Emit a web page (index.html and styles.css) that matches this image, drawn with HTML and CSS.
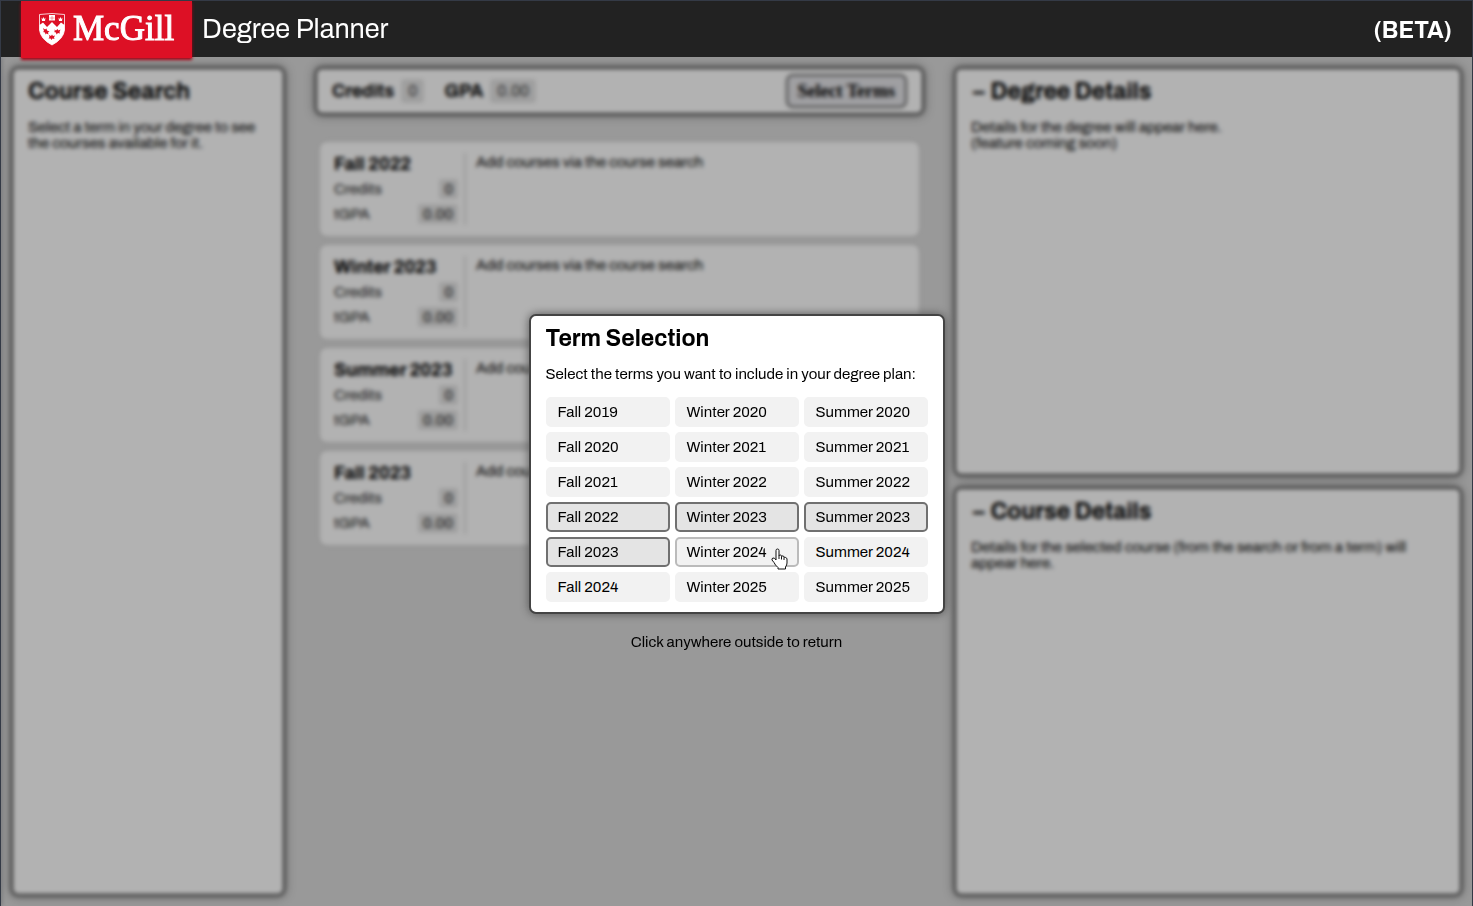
FILE: index.html
```html
<!DOCTYPE html>
<html lang="en">
<head>
<meta charset="utf-8">
<title>McGill Degree Planner</title>
<link rel="stylesheet" href="styles.css">
</head>
<body>
<header class="topbar">
  <a class="logo" href="#">
    <svg class="crest" viewBox="0 0 27 33" aria-hidden="true">
      <path d="M1 1.500Q13.500-.5 26 1.500V17Q25 26 13.500 32Q2 26 1 17Z" fill="#dd1025" stroke="#fff" stroke-width=".8"/>
      <path d="M1 12L4.500 9.500L8.500 14L13.500 9L18.500 14L22.500 9.500L26 12V17Q25 26 13.500 32Q2 26 1 17Z" fill="#fff"/>
      <path d="M10.500 2h6v5.500h-6z" fill="#fff"/>
      <path d="M11 5h5M13.500 3v4" stroke="#dd1025" stroke-width=".4"/>
      <path d="M3 4.500l1 1.500 1-2 1 2 1-1.500-.5 3.500h-3zM20 4.500l1 1.500 1-2 1 2 1-1.500-.5 3.500h-3z" fill="#fff"/>
      <path d="M4.500 15l2 1.500 1.500-1 .5 2 2.500 1-1.500 1 .5 2-2-1-1 1-.5-2-2-.5 1-1zM15.500 16.500l2 1 1.500-1.500 1 1.500 2-1-1 2.500.5 1.500-2-.5-1.500 1.500-.5-2-2-.5 1-1zM10.500 22l2 1 1-1.500 1 1.500 2-.5-1 2 .5 1.500-2-.5-1 1.500-1-1.500-2 0 1-1.500z" fill="#dd1025"/>
    </svg>
    <span class="wordmark">McGill</span>
  </a>
  <h1 class="app-title">Degree Planner</h1>
  <strong class="beta">(BETA)</strong>
</header>

<div class="stage">
  <main class="planner">
    <section class="panel">
      <h2>Course Search</h2>
      <p>Select a term in your degree to see the courses available for it.</p>
    </section>

    <section class="plan">
      <div class="panel summary">
        <span class="summary-label">Credits</span><span class="chip">0</span>
        <span class="summary-label gpa">GPA</span><span class="chip">0.00</span>
        <button class="select-terms" type="button">Select Terms</button>
      </div>
      <div class="terms">
        <article class="term">
          <div class="term-info"><h3>Fall 2022</h3>
            <div class="stat"><span>Credits</span><span class="value">0</span></div>
            <div class="stat"><span>tGPA</span><span class="value">0.00</span></div></div>
          <p class="term-courses">Add courses via the course search</p>
        </article>
        <article class="term">
          <div class="term-info"><h3>Winter 2023</h3>
            <div class="stat"><span>Credits</span><span class="value">0</span></div>
            <div class="stat"><span>tGPA</span><span class="value">0.00</span></div></div>
          <p class="term-courses">Add courses via the course search</p>
        </article>
        <article class="term">
          <div class="term-info"><h3>Summer 2023</h3>
            <div class="stat"><span>Credits</span><span class="value">0</span></div>
            <div class="stat"><span>tGPA</span><span class="value">0.00</span></div></div>
          <p class="term-courses">Add courses via the course search</p>
        </article>
        <article class="term">
          <div class="term-info"><h3>Fall 2023</h3>
            <div class="stat"><span>Credits</span><span class="value">0</span></div>
            <div class="stat"><span>tGPA</span><span class="value">0.00</span></div></div>
          <p class="term-courses">Add courses via the course search</p>
        </article>
      </div>
    </section>

    <div class="details">
      <section class="panel">
        <h2><span class="collapse">–</span>Degree Details</h2>
        <p>Details for the degree will appear here.<br>(feature coming soon)</p>
      </section>
      <section class="panel">
        <h2><span class="collapse">–</span>Course Details</h2>
        <p>Details for the selected course (from the search or from a term) will appear here.</p>
      </section>
    </div>
  </main>

  <div class="overlay">
    <div class="dialog" role="dialog" aria-labelledby="dialog-title">
      <h2 id="dialog-title">Term Selection</h2>
      <p>Select the terms you want to include in your degree plan:</p>
      <div class="term-grid">
        <button type="button">Fall 2019</button><button type="button">Winter 2020</button><button type="button">Summer 2020</button>
        <button type="button">Fall 2020</button><button type="button">Winter 2021</button><button type="button">Summer 2021</button>
        <button type="button">Fall 2021</button><button type="button">Winter 2022</button><button type="button">Summer 2022</button>
        <button type="button" aria-pressed="true">Fall 2022</button><button type="button" aria-pressed="true">Winter 2023</button><button type="button" aria-pressed="true">Summer 2023</button>
        <button type="button" aria-pressed="true">Fall 2023</button>
        <button type="button" class="hovered">Winter 2024<svg class="pointer" viewBox="0 0 17 22" aria-hidden="true"><path d="M5 12V2.500Q5 1 6.500 1T8 2.500V8Q8 7 9.300 7T10.500 8.500Q10.700 7.700 12 8T13 9.500Q13.500 9 14.700 9.500T16 11V15Q16 17 14.500 19V21H7V19.500Q4 17 3 14.500L1 12Q.5 10.500 2 10T5 12ZM8 8V11M10.500 8.500V11.500M13 9.500V12" fill="#fff" stroke="#111" stroke-linejoin="round"/></svg></button>
        <button type="button">Summer 2024</button>
        <button type="button">Fall 2024</button><button type="button">Winter 2025</button><button type="button">Summer 2025</button>
      </div>
    </div>
    <p class="hint">Click anywhere outside to return</p>
  </div>
</div>
</body>
</html>
```
FILE: styles.css
```css
* { box-sizing: border-box; }
h1, h2, h3, p { margin: 0; }

body {
  margin: 0;
  min-height: 100vh;
  display: flex;
  flex-direction: column;
  border: 1px solid #343a46;
  border-bottom: 0;
  background: #dbdbdb;
  color: #000;
  font: 15px/16px Archivo, "Liberation Sans", Arial, sans-serif;
}
button { font: inherit; color: inherit; cursor: pointer; }

.topbar {
  position: relative;
  z-index: 2;
  display: flex;
  align-items: center;
  height: 56px;
  padding: 0 20px;
  background: #222;
  color: #fff;
}
.logo {
  align-self: flex-start;
  display: flex;
  align-items: center;
  gap: 7px;
  height: 57px;
  padding: 0 18px 0 17px;
  background: #dd1025;
  box-shadow: 0 2px 3px #a00014;
  color: #fff;
  text-decoration: none;
}
.crest { width: 28px; height: 33px; }
.wordmark { padding-bottom: 3px; font: 35px/53px "Liberation Serif", serif; -webkit-text-stroke: 1px #fff; }
.app-title { margin-left: 10px; font-size: 27px; font-weight: 400; line-height: 32px; }
.beta { margin-left: auto; padding-top: 3px; font-size: 23px; line-height: 28px; }

.stage { position: relative; flex: 1; display: flex; }
.planner {
  flex: 1;
  display: grid;
  grid-template-columns: 274fr 609fr 508fr;
  gap: 30px;
  padding: 10px;
}
.panel {
  padding: 9px 15px;
  border: 2px solid #444;
  border-radius: 7px;
  background: #fff;
  box-shadow: 0 0 10px #777;
}
h2 { font-size: 23px; line-height: 28px; }
.panel p { margin-top: 13px; }
.collapse { margin: 0 6px 0 2px; }
.details { display: grid; grid-template-rows: 1fr 1fr; gap: 11px; }

.plan { display: flex; flex-direction: column; gap: 27px; }
.summary { display: flex; align-items: center; height: 48px; padding: 0 15px; }
.summary-label { font-size: 18px; font-weight: bold; }
.gpa { margin-left: 20px; }
.chip {
  margin-left: 7px;
  padding: 4px 7px;
  border-radius: 4px;
  background: #e4e4e4;
  color: #444;
  font-size: 16px;
}
.select-terms {
  margin-left: auto;
  padding: 6px 10px;
  border: 2px solid #666;
  border-radius: 7px;
  background: #e4e4e8;
  font: bold 18px/18px "Liberation Serif", serif;
}

.terms { display: flex; flex-direction: column; gap: 9px; padding: 0 5px; }
.term {
  display: flex;
  height: 94px;
  padding: 11px 14px;
  border-radius: 7px;
  background: #fff;
  box-shadow: 0 0 4px #ccc;
}
.term-info { width: 132px; padding-right: 6px; border-right: 2px solid #ddd; }
.term-info h3 { margin-bottom: 4px; font-size: 18px; line-height: 22px; }
.stat { display: flex; justify-content: space-between; height: 25px; align-items: flex-start; color: #222; }
.value { padding: 2px 5px; border-radius: 3px; background: #e4e4e4; }
.stat span:first-child { padding-top: 2px; }
.term-courses { padding: 1px 10px; }

.overlay {
  position: absolute;
  inset: 0;
  display: flex;
  flex-direction: column;
  align-items: center;
  justify-content: center;
  gap: 20px;
  background: rgba(0, 0, 0, .3);
  backdrop-filter: blur(2px);
}
.dialog {
  padding: 9px 15px 10px;
  border: 2px solid #444;
  border-radius: 7px;
  background: #fff;
  box-shadow: 0 0 10px #555;
}
.dialog p { margin: 13px 0 15px; }
.term-grid { display: grid; grid-template-columns: repeat(3, 124px); gap: 5px; }
.term-grid button {
  position: relative;
  height: 30px;
  padding: 0 10px;
  border: 2px solid #f2f2f2;
  border-radius: 5px;
  background: #f2f2f2;
  text-align: left;
}
.term-grid button[aria-pressed="true"] { border-color: #707070; background: #e4e4e4; }
.term-grid .hovered { border-color: #bbb; }
.pointer { position: absolute; right: 9px; bottom: -5px; width: 17px; height: 22px; }
```
